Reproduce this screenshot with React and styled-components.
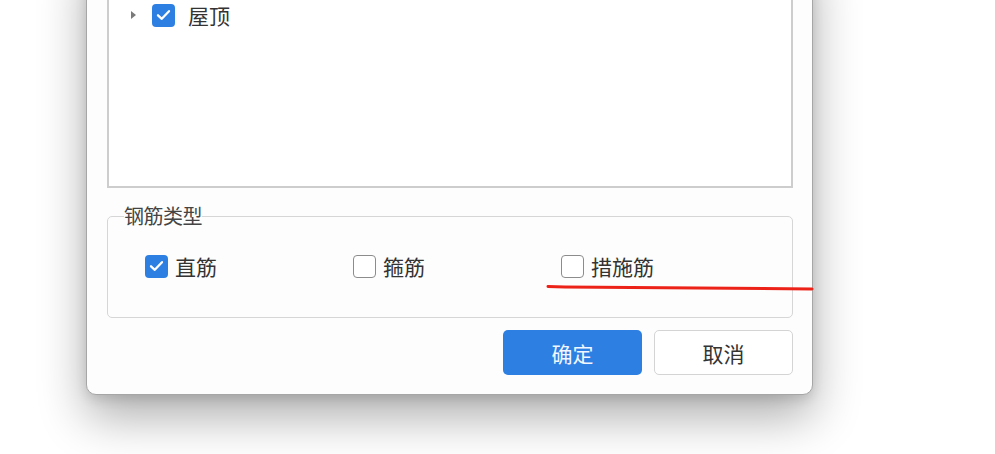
import React from "react";
import styled, { createGlobalStyle } from "styled-components";

const Global = createGlobalStyle`
  html, body { margin: 0; padding: 0; background: #ffffff; }
  body { font-family: "Noto Sans CJK SC", "Noto Sans", sans-serif; color: #333; }
`;

const Page = styled.div`
  position: relative;
  width: 995px;
  height: 454px;
  overflow: hidden;
  display: flex;
  flex-direction: column;
  justify-content: flex-end;
  padding: 0 0 59px 86px;
  box-sizing: border-box;
`;

const Dialog = styled.div`
  width: 727px;
  box-sizing: border-box;
  background: #fdfdfd;
  border: 1px solid #a6a6a6;
  border-radius: 10px;
  box-shadow: 0 22px 48px rgba(0, 0, 0, 0.32), 0 4px 12px rgba(0, 0, 0, 0.12);
  padding: 0 19px 19px 20px;
  display: flex;
  flex-direction: column;
`;

const TreeBox = styled.div`
  height: 240px;
  border: 2px solid #cdcdcd;
  border-top: none;
  background: #fff;
  display: flex;
  flex-direction: column;
  justify-content: flex-start;
  padding-top: 54px;
  box-sizing: border-box;
`;

const TreeRow = styled.div`
  display: flex;
  align-items: center;
  height: 26px;
  padding-left: 22px;
`;

const Caret = styled.span`
  width: 0;
  height: 0;
  border-top: 4.5px solid transparent;
  border-bottom: 4.5px solid transparent;
  border-left: 5px solid #7a7a7a;
  margin-right: 16px;
`;

const Box = styled.span`
  width: 23px;
  height: 23px;
  box-sizing: border-box;
  border-radius: 4px;
  flex: none;
  display: inline-flex;
  align-items: center;
  justify-content: center;
  background: ${(p) => (p.$checked ? "#2d7fe2" : "#fff")};
  border: ${(p) => (p.$checked ? "none" : "1.5px solid #8c8c8c")};
`;

const Label = styled.span`
  font-size: 21px;
  line-height: 26px;
  color: #333;
  margin-left: ${(p) => p.$gap || 7}px;
  white-space: nowrap;
`;

const Group = styled.fieldset`
  margin: 16px 0 0 0;
  padding: 0;
  min-width: 0;
  border: 1px solid #d6d6d6;
  border-radius: 5px;
`;

const Legend = styled.legend`
  font-size: 20px;
  line-height: 24px;
  color: #444;
  padding: 0;
  margin-left: 16px;
  letter-spacing: -0.5px;
`;

const OptionRow = styled.div`
  height: 76px;
  padding: 0 0 13px 37px;
  display: grid;
  grid-template-columns: 208px 208px 208px;
  align-items: center;
`;

const Option = styled.label`
  display: flex;
  align-items: center;
`;

const Footer = styled.div`
  display: flex;
  justify-content: flex-end;
  gap: 12px;
  margin-top: 12px;
`;

const Button = styled.button`
  width: 139px;
  height: 45px;
  box-sizing: border-box;
  border-radius: 5px;
  font-family: inherit;
  font-size: 21px;
  cursor: pointer;
  background: ${(p) => (p.$primary ? "#2d7fe2" : "#fff")};
  color: ${(p) => (p.$primary ? "#f2f7ff" : "#333")};
  border: ${(p) => (p.$primary ? "none" : "1.5px solid #d4d4d4")};
`;

const Annotation = styled.svg`
  position: absolute;
  left: 0;
  top: 0;
  pointer-events: none;
`;

const Check = () => (
  <svg width="15" height="12" viewBox="0 0 15 12">
    <path d="M2 6.3 L5.8 9.8 L13 2.2" fill="none" stroke="#fff" strokeWidth="2.3" strokeLinecap="round" strokeLinejoin="round" />
  </svg>
);

const CheckBox = ({ checked }) => <Box $checked={checked}>{checked && <Check />}</Box>;

export default function App() {
  return (
    <>
      <Global />
      <Page>
        <Dialog>
          <TreeBox>
            <TreeRow>
              <Caret />
              <CheckBox checked />
              <Label $gap={13}>屋顶</Label>
            </TreeRow>
          </TreeBox>
          <Group>
            <Legend>钢筋类型</Legend>
            <OptionRow>
              <Option>
                <CheckBox checked />
                <Label>直筋</Label>
              </Option>
              <Option>
                <CheckBox />
                <Label>箍筋</Label>
              </Option>
              <Option>
                <CheckBox />
                <Label>措施筋</Label>
              </Option>
            </OptionRow>
          </Group>
          <Footer>
            <Button $primary>确定</Button>
            <Button>取消</Button>
          </Footer>
        </Dialog>
        <Annotation width="995" height="454">
          <path d="M548 286.5 L565 287 L812 289" fill="none" stroke="#ec2219" strokeWidth="3" strokeLinecap="round" />
        </Annotation>
      </Page>
    </>
  );
}
